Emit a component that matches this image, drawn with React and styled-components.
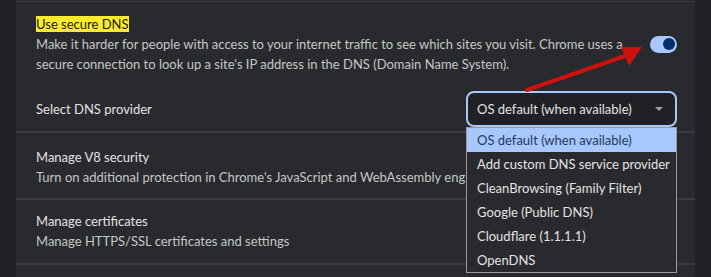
import React from "react";
import styled, { createGlobalStyle } from "styled-components";

const Global = createGlobalStyle`
  html, body { margin: 0; padding: 0; background: #202124; }
  body { font-family: Lato, "Noto Sans", sans-serif; font-size: 13px; }
`;

const Page = styled.div`
  position: relative;
  display: flex;
  width: 711px;
  height: 277px;
  overflow: hidden;
  background: #202124;
`;

const Gutter = styled.div`
  width: 16px;
  flex: none;
  background: #202124;
`;

const Panel = styled.div`
  flex: 1;
  background: #292a2d;
  padding-top: 1px;
  display: flex;
  flex-direction: column;
`;

const Separator = styled.div`
  height: ${(p) => p.$h || 2}px;
  background: #3a3b3e;
`;

const Section = styled.div`
  display: flex;
  align-items: center;
  justify-content: space-between;
  padding: ${(p) => p.$pad};
  padding-left: 20px;
  padding-right: 18px;
  gap: 20px;
`;

const TextBlock = styled.div`
  display: flex;
  flex-direction: column;
  line-height: 20px;
`;

const Title = styled.div`
  color: #e3e3e3;
`;

const Highlight = styled.span`
  background: #fbeb2d;
  color: #1b1b1b;
`;

const Desc = styled.div`
  color: #c4c7c5;
`;

const Toggle = styled.div`
  width: 27px;
  height: 17px;
  border-radius: 9px;
  background: #a8c7fa;
  flex: none;
  display: flex;
  align-items: center;
  justify-content: flex-end;
  padding: 0 2px;
  box-sizing: border-box;
`;

const Knob = styled.div`
  width: 12px;
  height: 12px;
  border-radius: 50%;
  background: #062e6f;
`;

const SelectWrap = styled.div`
  position: relative;
  flex: none;
`;

const SelectBox = styled.div`
  width: 211px;
  height: 36px;
  box-sizing: border-box;
  border: 2px solid #a8c7fa;
  border-radius: 8px;
  background: #202124;
  color: #e3e3e3;
  display: flex;
  align-items: center;
  justify-content: space-between;
  padding: 0 12px 0 9px;
`;

const Caret = styled.div`
  width: 0;
  height: 0;
  border-left: 4px solid transparent;
  border-right: 4px solid transparent;
  border-top: 4px solid #9aa0a6;
`;

const Menu = styled.ul`
  position: absolute;
  top: 36px;
  left: 0;
  width: 211px;
  box-sizing: border-box;
  margin: 0;
  padding: 0;
  list-style: none;
  background: #292a2d;
  border: 1px solid #9a9a9a;
  z-index: 2;
`;

const Item = styled.li`
  height: 24px;
  line-height: 24px;
  padding-left: 10px;
  color: ${(p) => (p.$active ? "#1f3a5f" : "#e3e3e3")};
  background: ${(p) => (p.$active ? "#a8c7fa" : "transparent")};
  white-space: nowrap;
`;

const ArrowSvg = styled.svg`
  position: absolute;
  left: 0;
  top: 0;
  pointer-events: none;
  z-index: 3;
`;

const options = [
  "OS default (when available)",
  "Add custom DNS service provider",
  "CleanBrowsing (Family Filter)",
  "Google (Public DNS)",
  "Cloudflare (1.1.1.1)",
  "OpenDNS",
];

export default function App() {
  return (
    <>
      <Global />
      <Page>
        <Gutter />
        <Panel>
          <Separator $h={1} />
          <Section $pad="12px 0 0">
            <TextBlock>
              <Title>
                <Highlight>Use secure DNS</Highlight>
              </Title>
              <Desc>
                Make it harder for people with access to your internet traffic to see which sites you visit. Chrome uses a
                secure connection to look up a site's IP address in the DNS (Domain Name System).
              </Desc>
            </TextBlock>
            <Toggle>
              <Knob />
            </Toggle>
          </Section>
          <Section $pad="17px 0 4px">
            <Title>Select DNS provider</Title>
            <SelectWrap>
              <SelectBox>
                <span>OS default (when available)</span>
                <Caret />
              </SelectBox>
              <Menu>
                {options.map((o, i) => (
                  <Item key={o} $active={i === 0}>
                    {o}
                  </Item>
                ))}
              </Menu>
            </SelectWrap>
          </Section>
          <Separator />
          <Section $pad="14px 0 11px">
            <TextBlock>
              <Title>Manage V8 security</Title>
              <Desc>Turn on additional protection in Chrome's JavaScript and WebAssembly engine</Desc>
            </TextBlock>
          </Section>
          <Separator />
          <Section $pad="11px 0 12px">
            <TextBlock>
              <Title>Manage certificates</Title>
              <Desc>Manage HTTPS/SSL certificates and settings</Desc>
            </TextBlock>
          </Section>
          <Separator />
        </Panel>
        <Gutter />
        <ArrowSvg width="711" height="277" viewBox="0 0 711 277">
          <line x1="527" y1="90" x2="628" y2="55" stroke="#cc1111" strokeWidth="4" strokeLinecap="round" />
          <polygon points="642,47 621,47 629,66" fill="#cc1111" />
        </ArrowSvg>
      </Page>
    </>
  );
}
